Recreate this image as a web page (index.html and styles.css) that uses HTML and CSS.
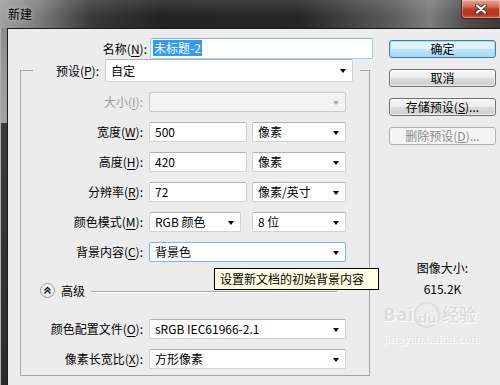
FILE: index.html
```html
<!DOCTYPE html>
<html lang="zh-CN">
<head>
    <meta charset="UTF-8">
    <title>新建</title>
    <link rel="stylesheet" href="styles.css">
</head>
<body>
    <div class="window">
        <!-- Titelleiste -->
        <div class="titlebar">
            <span class="title">新建</span>
            <div class="close">
                <svg width="14" height="10" viewBox="0 0 14 10">
                    <path d="M3 1.5 L11 8.5 M11 1.5 L3 8.5" stroke="#3a3a3a" stroke-width="4" stroke-linecap="round"/>
                    <path d="M3 1.5 L11 8.5 M11 1.5 L3 8.5" stroke="#fff" stroke-width="2.2" stroke-linecap="round"/>
                </svg>
            </div>
        </div>

        <div class="frame">
            <div class="edge"></div>
            <div class="client">
                <div class="main">
                    <div class="name-row">
                        <label class="name-label">名称(<u>N</u>):</label>
                        <div class="textbox name"><span class="selected">未标题-2</span></div>
                    </div>

                    <fieldset class="group">
                        <legend class="preset">
                            <label class="preset-label">预设(<u>P</u>):</label>
                            <div class="select preset-select">自定</div>
                        </legend>

                        <div class="row">
                            <label class="disabled-text">大小(<u>I</u>):</label>
                            <div class="select wide disabled"></div>
                        </div>
                        <div class="row">
                            <label>宽度(<u>W</u>):</label>
                            <div class="textbox num">500</div>
                            <div class="select unit">像素</div>
                        </div>
                        <div class="row">
                            <label>高度(<u>H</u>):</label>
                            <div class="textbox num">420</div>
                            <div class="select unit">像素</div>
                        </div>
                        <div class="row">
                            <label>分辨率(<u>R</u>):</label>
                            <div class="textbox num">72</div>
                            <div class="select unit">像素/英寸</div>
                        </div>
                        <div class="row">
                            <label>颜色模式(<u>M</u>):</label>
                            <div class="select mode">RGB 颜色</div>
                            <div class="select unit">8 位</div>
                        </div>
                        <div class="row">
                            <label>背景内容(<u>C</u>):</label>
                            <div class="select wide focus">背景色</div>
                        </div>

                        <div class="advanced">
                            <span class="toggle">
                                <svg width="13" height="13" viewBox="0 0 13 13">
                                    <path d="M3.5 6.5 L6.5 3.5 L9.5 6.5 M3.5 9.5 L6.5 6.5 L9.5 9.5" fill="none" stroke="#111" stroke-width="1.4"/>
                                </svg>
                            </span>
                            <span class="advanced-text">高级</span>
                            <span class="rule"></span>
                        </div>

                        <div class="row">
                            <label>颜色配置文件(<u>O</u>):</label>
                            <div class="select wide">sRGB IEC61966-2.1</div>
                        </div>
                        <div class="row">
                            <label>像素长宽比(<u>X</u>):</label>
                            <div class="select wide">方形像素</div>
                        </div>
                    </fieldset>
                </div>

                <div class="side">
                    <div class="btn default">确定</div>
                    <div class="btn">取消</div>
                    <div class="btn">存储预设(<u>S</u>)...</div>
                    <div class="btn disabled">删除预设(<u>D</u>)...</div>

                    <div class="info">
                        <div>图像大小:</div>
                        <div class="info-value">615.2K</div>
                    </div>
                </div>
            </div>
        </div>

        <!-- Tooltip -->
        <div class="tooltip">设置新文档的初始背景内容</div>

        <!-- Wasserzeichen -->
        <div class="watermark">
            <div class="wm-logo"><span>Bai</span><span class="wm-paw">du</span><span>经验</span></div>
            <div class="wm-url">jingyan.baidu.com</div>
        </div>
    </div>
</body>
</html>
```

FILE: styles.css
```css
body {
    margin: 0;
    font-family: "Noto Sans CJK SC", "Microsoft YaHei", sans-serif;
    font-size: 12px;
    color: #000;
}
.window {
    position: relative;
    width: 500px;
    height: 385px;
    overflow: hidden;
    background: #2a2a2a;
}
.titlebar {
    display: flex;
    align-items: flex-start;
    height: 28px;
    background:
        linear-gradient(to bottom, rgba(255,255,255,0.12), rgba(0,0,0,0) 60%),
        linear-gradient(to right, #a2a2a2 0, #7a7a7a 40px, #3a3a3a 90px, #222 160px, #262626 300px, #5a5a5a 390px, #7c7c7c 430px, #4a4a4a 470px, #3a3a3a 500px);
}
.title {
    padding: 6px 0 0 8px;
    line-height: 16px;
    text-shadow: 0 0 6px rgba(255,255,255,0.6);
}
.close {
    display: flex;
    align-items: center;
    justify-content: center;
    margin-left: auto;
    width: 39px;
    height: 19px;
    box-sizing: border-box;
    border: 1px solid #4a2219;
    border-top: none;
    border-right: none;
    border-radius: 0 0 0 4px;
    background: linear-gradient(to bottom, #e3a492 0, #d4735c 35%, #c23a1f 50%, #b5331b 80%, #d0603f 100%);
    box-shadow: inset 0 0 0 1px rgba(255,255,255,0.35);
}
.frame {
    display: flex;
    height: 357px;
}
.edge {
    width: 7px;
    background:
        linear-gradient(to right, #b0b0b0 0, #b0b0b0 1px, transparent 1px),
        linear-gradient(to bottom, #8d8d8d 0, #a5a5a5 95px, #3d3d3d 92px, #2b2b2b 100%);
}
.client {
    flex: 1;
    display: flex;
    background: #ececec;
    border-top: 1px solid #1c1c1c;
    border-left: 1px solid #1c1c1c;
}
.main {
    width: 372px;
}
.name-row {
    display: flex;
    align-items: center;
    margin-top: 9px;
    height: 21px;
}
.name-label {
    width: 139px;
    margin-right: 3px;
    text-align: right;
    line-height: 16px;
}
label u {
    text-decoration-thickness: 1px;
    text-underline-offset: 2px;
}
.textbox,
.select {
    position: relative;
    box-sizing: border-box;
    height: 20px;
    line-height: 18px;
    padding-left: 5px;
    background: #fff;
    border: 1px solid #d0d2d6;
    border-top-color: #aeb0b6;
    border-radius: 2px;
    white-space: nowrap;
}
.textbox.name {
    width: 223px;
    height: 21px;
    padding-left: 2px;
    border-color: #a9c9e6;
    border-top-color: #8db6dc;
}
.selected {
    display: inline-block;
    height: 16px;
    line-height: 16px;
    margin-top: 1px;
    padding: 0 1px;
    background: #3399ff;
    color: #fff;
}
.select::after {
    content: "";
    position: absolute;
    right: 6px;
    top: 8px;
    border-top: 4px solid #000;
    border-left: 3.5px solid transparent;
    border-right: 3.5px solid transparent;
}
.group {
    box-sizing: border-box;
    width: 350px;
    margin: 0 0 0 12px;
    padding: 10px 0 6px 0;
    border: 1px solid #a3a3a3;
    min-inline-size: 0;
}
.preset {
    display: flex;
    align-items: center;
    margin: 4px 0 0 12px;
    padding: 0 7px 0 0;
}
.preset-label {
    width: 66px;
    text-align: right;
    line-height: 16px;
}
.preset-select {
    width: 248px;
    height: 23px;
    line-height: 21px;
    margin-left: 6px;
}
.preset-select::after {
    top: 9px;
}
.row {
    display: flex;
    align-items: center;
    height: 20px;
    margin-bottom: 10px;
}
.row label {
    width: 122px;
    margin-right: 6px;
    text-align: right;
    line-height: 16px;
}
.row:last-child {
    margin-bottom: 0;
}
.wide {
    width: 197px;
}
.num {
    width: 98px;
    margin-right: 5px;
}
.unit {
    width: 94px;
}
.mode {
    width: 92px;
    margin-right: 11px;
}
.disabled {
    background: #f3f3f3;
    border-color: #c9c9c9;
}
.disabled::after {
    border-top-color: #a8a8a8;
}
.disabled-text {
    color: #9a9a9a;
}
.focus {
    border-color: #7eb4e6;
}
.advanced {
    display: flex;
    align-items: center;
    height: 15px;
    margin: 21px 0 21px 19px;
}
.toggle {
    display: flex;
    align-items: center;
    justify-content: center;
    box-sizing: border-box;
    width: 15px;
    height: 15px;
    border: 1px solid #9c9c9c;
    border-radius: 50%;
    background: radial-gradient(circle at 50% 35%, #fff 0, #f4f4f4 45%, #d6d6d6 100%);
}
.advanced-text {
    margin-left: 6px;
    line-height: 16px;
}
.rule {
    flex: 1;
    height: 1px;
    margin: 1px 32px 0 6px;
    background: #a8a8a8;
    box-shadow: 0 1px 0 #fff;
}
.side {
    width: 107px;
    padding: 11px 0 0 9px;
}
.btn {
    box-sizing: border-box;
    height: 18px;
    margin-bottom: 11px;
    line-height: 16px;
    text-align: center;
    border: 1px solid #707070;
    border-radius: 3px;
    background: linear-gradient(to bottom, #f6f6f6 0, #ececec 50%, #dcdcdc 50%, #cecece 100%);
    box-shadow: inset 0 0 0 1px rgba(255,255,255,0.7);
}
.btn.default {
    border-color: #3c7fb1;
    background: linear-gradient(to bottom, #eaf6fd 0, #d9f0fc 50%, #bee6fd 50%, #a7d9f5 100%);
    box-shadow: inset 0 0 0 1px #a3dcf7;
}
.btn.disabled {
    border-color: #adb2b5;
    background: #f4f4f4;
    color: #8b8b8b;
    box-shadow: none;
}
.info {
    margin-top: 115px;
    text-align: center;
    line-height: 16px;
}
.info-value {
    margin-top: 5px;
}
.tooltip {
    position: absolute;
    left: 214px;
    top: 268px;
    box-sizing: border-box;
    width: 165px;
    height: 22px;
    padding: 0 0 0 5px;
    line-height: 20px;
    background: #ffffe1;
    border: 1px solid #000;
}
.watermark {
    position: absolute;
    left: 383px;
    top: 300px;
    color: #dedede;
    text-shadow: 0 0 1px #fff, 1px 1px 0 #fff;
}
.wm-logo {
    display: flex;
    align-items: center;
    font-family: "DejaVu Sans", sans-serif;
    font-weight: bold;
    font-size: 17px;
    line-height: 30px;
}
.wm-paw {
    display: inline-block;
    width: 26px;
    height: 26px;
    margin: 0 2px 0 1px;
    line-height: 30px;
    text-align: center;
    font-size: 13px;
    border: 2px solid #dedede;
    border-radius: 50%;
    box-sizing: border-box;
}
.wm-url {
    margin-top: 2px;
    font-family: "Liberation Serif", serif;
    font-size: 13px;
    line-height: 14px;
}
```
